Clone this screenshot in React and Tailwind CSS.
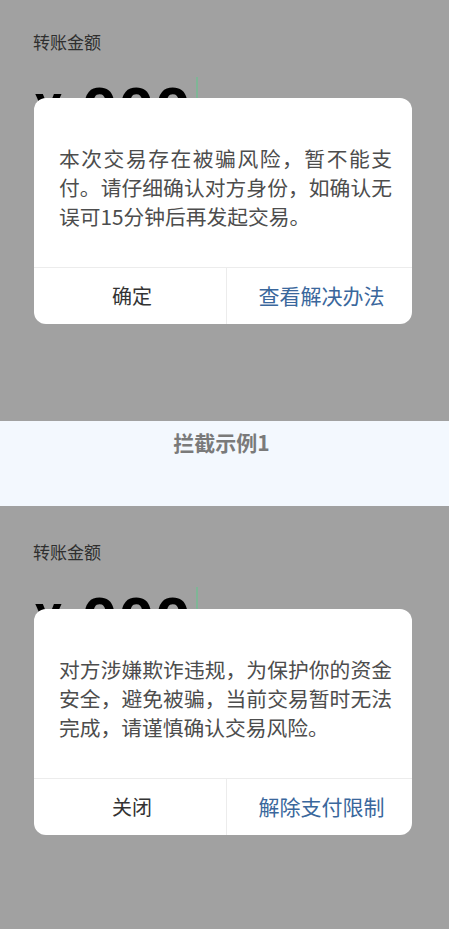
import React from "react";

const font = { fontFamily: '"Noto Sans CJK SC", "Noto Sans", sans-serif' };

const AmountRow = () => (
  <div className="flex items-start pl-[35px] mt-[27px]">
    <span className="text-[50px] leading-[60px] font-bold text-black font-['Roboto',sans-serif] mt-[2px]">
      ¥
    </span>
    <span className="ml-[20px] text-[62px] leading-[60px] font-bold text-black tracking-[1px] font-['Roboto',sans-serif]">
      000
    </span>
    <span className="ml-[4px] mt-[-4px] w-[2px] h-[28px] bg-[#7fb596]" />
  </div>
);

const Dialog = ({ lines, left, right, top }) => (
  <div
    className={`absolute left-[34px] w-[378px] bg-white rounded-[12px] overflow-hidden ${top}`}
  >
    <div className="pl-[25px] pr-[20px] pt-[46px] pb-[36px] text-[20.75px] leading-[29px] text-[#4d4d4d]">
      {lines.map((l, i) => (
        <div
          key={l}
          className={`whitespace-nowrap ${i < lines.length - 1 ? "text-justify [text-align-last:justify]" : ""}`}
        >
          {l}
        </div>
      ))}
    </div>
    <div className="flex border-t border-[#ececec] h-[57px]">
      <div className="flex-1 flex items-center justify-center text-[20px] text-[#333333] pl-[4px]">
        {left}
      </div>
      <div className="w-px bg-[#ececec]" />
      <div className="w-[185px] flex items-center justify-center text-[21px] text-[#3a679c] pl-[4px]">
        {right}
      </div>
    </div>
  </div>
);

const Example = ({ h, pt, dialogTop, lines, left, right }) => (
  <section className={`relative bg-[#a1a1a1] overflow-hidden ${h}`}>
    <div className={`pl-[33px] text-[17px] leading-[24px] text-[#2f2f2f] ${pt}`}>
      转账金额
    </div>
    <AmountRow />
    <Dialog lines={lines} left={left} right={right} top={dialogTop} />
  </section>
);

export default function App() {
  return (
    <div className="w-[449px] h-[929px] overflow-hidden" style={font}>
      <Example
        h="h-[421px]"
        pt="pt-[30px]"
        dialogTop="top-[98px]"
        lines={[
          "本次交易存在被骗风险，暂不能支",
          "付。请仔细确认对方身份，如确认无",
          "误可15分钟后再发起交易。",
        ]}
        left="确定"
        right="查看解决办法"
      />
      {/* caption band */}
      <div className="h-[85px] bg-[#f3f8fe] flex justify-center pt-[7px]">
        <span className="text-[21px] leading-[29px] font-bold text-[#7a7a7a] pr-[6px]">
          拦截示例1
        </span>
      </div>
      <Example
        h="h-[423px]"
        pt="pt-[34px]"
        dialogTop="top-[103px]"
        lines={[
          "对方涉嫌欺诈违规，为保护你的资金",
          "安全，避免被骗，当前交易暂时无法",
          "完成，请谨慎确认交易风险。",
        ]}
        left="关闭"
        right="解除支付限制"
      />
    </div>
  );
}
